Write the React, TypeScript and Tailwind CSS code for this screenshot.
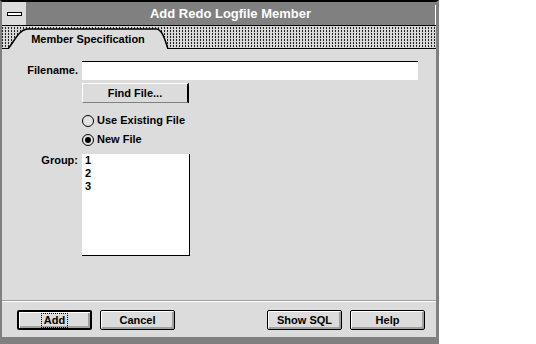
import React from "react";

const font = { fontFamily: '"Liberation Sans", Arial, sans-serif' };

function Radio({ checked, label }: { checked?: boolean; label: string }) {
  return (
    <div className="flex h-[19px] items-center gap-[3px]">
      <div className="flex h-[12px] w-[12px] items-center justify-center rounded-full border border-black bg-[#e4e4e4]">
        {checked && <div className="h-[6px] w-[6px] rounded-full bg-black" />}
      </div>
      <span className="text-[11px] font-bold text-black">{label}</span>
    </div>
  );
}

function Button({ label, isDefault, focused, className = "" }: { label: string; isDefault?: boolean; focused?: boolean; className?: string }) {
  return (
    <div
      className={
        "flex h-[20px] w-[75px] items-center justify-center rounded-[2px] bg-[#dcdcdc] shadow-[inset_1px_1px_#ffffff,inset_-2px_-2px_#a0a0a0] " +
        (isDefault ? "border-2 border-black " : "border border-black ") +
        className
      }
    >
      <span className={"px-[2px] text-[11px] font-bold leading-[13px] text-black " + (focused ? "outline-1 outline-dotted outline-black" : "")}>
        {label}
      </span>
    </div>
  );
}

export default function App() {
  return (
    <div className="flex h-[344px] w-full bg-white" style={font}>
      <div className="flex h-[344px] w-[439px] flex-col border-t-2 border-l-2 border-r-[3px] border-b-[7px] border-t-black border-l-[#808080] border-r-[#808080] border-b-[#808080]">
        {/* title bar */}
        <div className="flex h-[24px] border-b border-black bg-[#808080]">
          <div className="flex w-[24px] items-center justify-center bg-[#dcdcdc]">
            <div className="h-[4px] w-[15px] border border-black bg-white" />
          </div>
          <div className="flex flex-1 items-center justify-center text-[13px] font-bold text-white">Add Redo Logfile Member</div>
          <div className="mt-[3px] w-px bg-white" />
        </div>

        {/* tab strip */}
        <div className="flex h-[23px] border-b border-black bg-[#d8d8d8] bg-[image:repeating-linear-gradient(0deg,#d8d8d8_0_1px,transparent_1px_3px),repeating-linear-gradient(90deg,#222_0_1px,transparent_1px_3px)]">
          <div className="relative -mb-px ml-[5px] flex h-[23px] w-[162px] items-center justify-center">
            <svg className="absolute inset-0" width="162" height="23" viewBox="0 0 162 23">
              <path d="M1 23 C8 14 12 4 20 3 L150 3 C154 4 156 8 158 14 L161 23 Z" fill="#dcdcdc" />
              <path d="M1 23 C8 14 12 4 20 3 L150 3 C154 4 156 8 158 14 L161 23" fill="none" stroke="#000" strokeWidth="1.5" />
            </svg>
            <span className="relative mt-[4px] text-[11px] font-bold text-black">Member Specification</span>
          </div>
        </div>

        {/* content */}
        <div className="flex flex-1 flex-col bg-[#dcdcdc]">
          <div className="grid grid-cols-[80px_1fr] pt-[12px]">
            <div className="flex h-[19px] items-center justify-end pr-[4px] text-[11px] font-bold text-black">Filename.</div>
            <div className="h-[19px] w-[336px] border-t border-black bg-white" />

            <div />
            <div className="mt-[3px] flex h-[20px] w-[107px] items-center justify-center border-t border-l border-white border-r-2 border-b border-r-black border-b-[#808080] bg-[#dcdcdc] text-[11px] font-bold text-black">
              Find File...
            </div>

            <div />
            <div className="mt-[8px] flex flex-col">
              <Radio label="Use Existing File" />
              <Radio label="New File" checked />
            </div>

            <div className="mt-[5px] flex justify-end pr-[4px] text-[11px] font-bold leading-[13px] text-black">Group:</div>
            <div className="mt-[5px] flex h-[102px] w-[108px] flex-col border-r border-b border-black bg-white pl-[3px] text-[11px] font-bold leading-[13px] text-black">
              <span>1</span>
              <span>2</span>
              <span>3</span>
            </div>
          </div>

          <div className="flex-1" />
          <div className="h-px bg-[#a0a0a0]" />
          <div className="h-px bg-white" />

          <div className="mt-[8px] mb-[7px] flex pl-[15px] pr-[11px]">
            <Button label="Add" isDefault focused />
            <Button label="Cancel" className="ml-[8px]" />
            <div className="flex-1" />
            <Button label="Show SQL" />
            <Button label="Help" className="ml-[8px]" />
          </div>
        </div>
      </div>
    </div>
  );
}
